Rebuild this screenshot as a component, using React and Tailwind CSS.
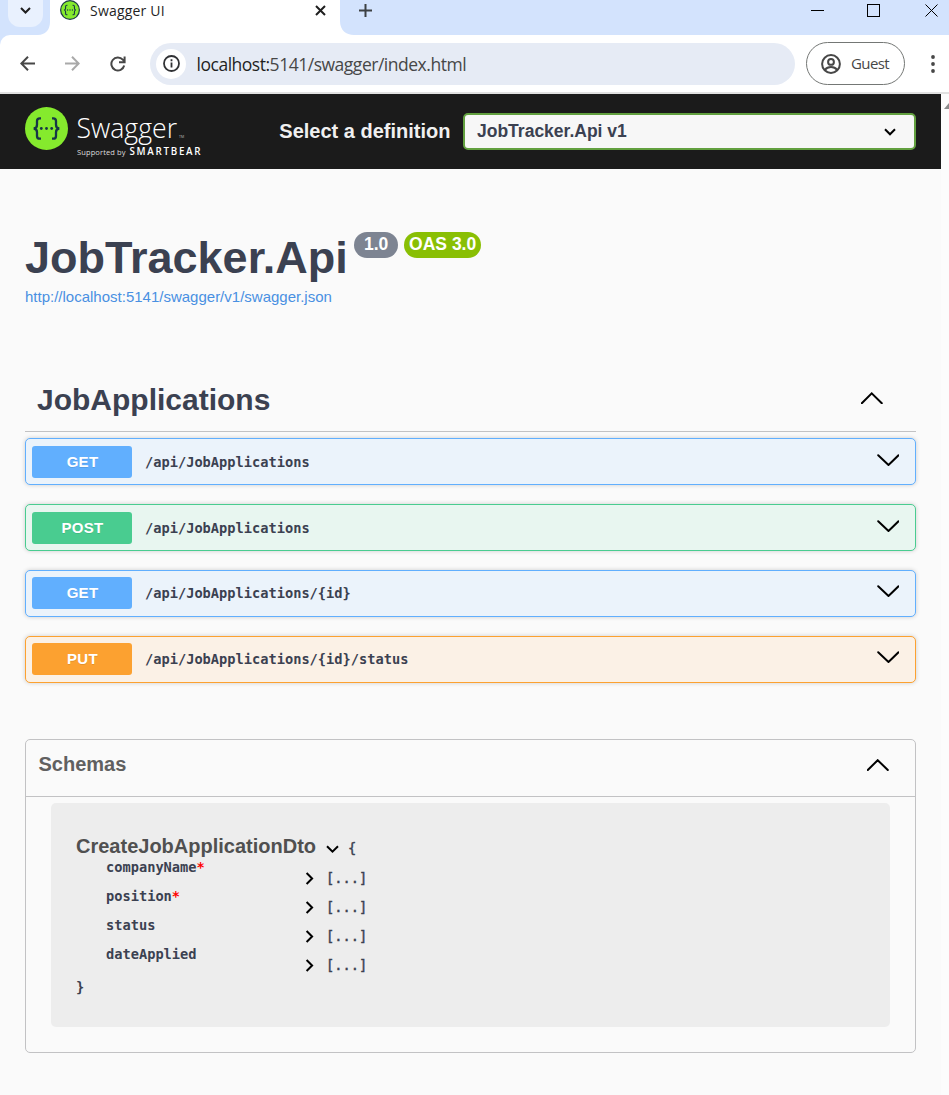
const sans = "font-['Liberation_Sans',Arial,sans-serif]";
const ui = "font-['Open_Sans','Noto_Sans',sans-serif]";
const mono = "font-['DejaVu_Sans_Mono','Liberation_Mono',monospace]";

function BracesLogo({ className, ring }) {
  return (
    <svg className={className} viewBox="0 0 43 43" fill="none">
      <circle cx="21.5" cy="21.5" r="21.5" fill={ring ? '#1d3b46' : '#85ea2d'} />
      {ring && <circle cx="21.5" cy="21.5" r="18.8" fill="#85ea2d" />}
      <path
        d="M16 11.3h-1.3c-1.8 0-2.7 1-2.7 2.8v3.6c0 2.3-1 3.6-3.3 3.8c2.3.2 3.3 1.5 3.3 3.8v3.6c0 1.8.9 2.8 2.7 2.8H16M27 11.3h1.3c1.8 0 2.7 1 2.7 2.8v3.6c0 2.3 1 3.6 3.3 3.8c-2.3.2-3.3 1.5-3.3 3.8v3.6c0 1.8-.9 2.8-2.7 2.8H27"
        stroke="#173647"
        strokeWidth="2.3"
      />
      <circle cx="16.3" cy="21.5" r="1.4" fill="#173647" />
      <circle cx="21.5" cy="21.5" r="1.4" fill="#173647" />
      <circle cx="26.7" cy="21.5" r="1.4" fill="#173647" />
    </svg>
  );
}

function Stroke({ className, box, d, width = 2, color = '#000', cap = 'butt' }) {
  return (
    <svg className={className} viewBox={box} fill="none" stroke={color} strokeWidth={width} strokeLinecap={cap}>
      <path d={d} />
    </svg>
  );
}

function TabStrip() {
  return (
    <div className="flex h-[35px] bg-[#d3e3fd]">
      <div className="ml-2 flex h-[27px] w-[35px] items-start justify-center rounded-b-[12px] bg-[#e9f1fe] pt-[7px]">
        <Stroke className="h-[7px] w-[11px]" box="0 0 11 7" d="M1 1l4.5 4.5L10 1" color="#1f1f1f" />
      </div>
      <svg className="ml-[-5px] h-[35px] w-[12px]" viewBox="0 0 12 35">
        <path d="M12 22v13H0c7 0 12-5 12-13z" fill="#fff" />
      </svg>
      <div className="flex h-[35px] w-[290px] items-start bg-white">
        <BracesLogo className="ml-[10px] h-5 w-5" ring />
        <span className={`${ui} ml-[10px] pt-px text-[14px] leading-5 tracking-[0.2px] text-[#1f1f1f]`}>Swagger UI</span>
        <Stroke className="ml-auto mr-[14.5px] mt-[5px] h-[11px] w-[11px]" box="0 0 11 11" d="M1 1l9 9M10 1l-9 9" color="#1f1f1f" />
      </div>
      <svg className="h-[35px] w-[14px]" viewBox="0 0 14 35">
        <path d="M0 21v14h14c-8 0-14-5-14-14z" fill="#fff" />
      </svg>
      <Stroke className="ml-[5px] mt-1 h-[13px] w-[13px]" box="0 0 13 13" d="M6.5 0v13M0 6.5h13" color="#3c4043" />
      <div className="ml-auto flex">
        <Stroke className="mt-1 h-[13px] w-[13px]" box="0 0 13 13" d="M0 6.5h13" width={1} />
        <div className="ml-[43px] mt-1 h-[13px] w-[13px] border border-black" />
        <Stroke className="ml-[45px] mr-[11px] mt-1 h-[13px] w-[13px]" box="0 0 13 13" d="M.5.5l12 12M12.5.5l-12 12" width={1} />
      </div>
    </div>
  );
}

function Toolbar() {
  return (
    <div className="bg-[#d3e3fd]">
      <div className="flex h-[57px] items-center rounded-tl-[10px] bg-white">
        <Stroke className="ml-5 h-[15px] w-[15px]" box="0 0 15 15" d="M15 7.5H1.5M8 .8L1.3 7.5L8 14.2" color="#474747" />
        <Stroke className="ml-[30px] h-[15px] w-[15px]" box="0 0 15 15" d="M0 7.5h13.5M7 .8l6.7 6.7L7 14.2" color="#a9a9a9" />
        <Stroke
          className="ml-[29.5px] h-4 w-4"
          box="0 0 16 16"
          d="M14.2 9.5A6.5 6.5 0 1 1 12.8 3.700L14.500 5.600M14.600 .5V6.200H9"
          color="#474747"
        />
        <div className="ml-[24.5px] flex h-[42px] w-[645px] items-center rounded-full bg-[#e6ebf5]">
          <div className="ml-[6px] flex h-[30px] w-[30px] items-center justify-center rounded-full bg-white">
            <svg className="h-[17px] w-[17px]" viewBox="0 0 17 17" fill="none" stroke="#303134" strokeWidth="1.8">
              <circle cx="8.5" cy="8.5" r="7.5" />
              <path d="M8.5 7.5v5M8.5 4.3v1.9" />
            </svg>
          </div>
          <span className={`${ui} ml-[10.5px] whitespace-nowrap pt-px text-[17.5px] leading-6 tracking-[-0.48px] text-[#474747]`}>
            <span className="text-[#1f1f1f]">localhost:</span>5141/swagger/index.html
          </span>
        </div>
        <div className="ml-[11px] flex h-[43px] w-[99px] items-center rounded-full border border-[#747775]">
          <svg className="ml-[14px] h-5 w-5" viewBox="0 0 20 20" fill="none" stroke="#474747" strokeWidth="2">
            <circle cx="10" cy="10" r="8.9" />
            <circle cx="10" cy="7.9" r="2.9" />
            <path d="M3.8 16c1.6-2 3.7-2.9 6.2-2.9s4.6.9 6.2 2.9" />
          </svg>
          <span className={`${ui} ml-[10px] pb-px text-[15px] leading-5 tracking-[-0.6px] text-[#474747]`}>Guest</span>
        </div>
        <svg className="ml-[25.5px] h-[18px] w-1" viewBox="0 0 4 18" fill="#474747">
          <circle cx="2" cy="2" r="1.9" />
          <circle cx="2" cy="9" r="1.9" />
          <circle cx="2" cy="16" r="1.9" />
        </svg>
      </div>
    </div>
  );
}

function TopBar() {
  return (
    <div className="flex h-[75px] w-[941px] bg-[#1b1b1b]">
      <BracesLogo className="ml-[25px] mt-[13px] h-[43px] w-[43px]" />
      <svg className={`${ui} ml-[9px] h-[75px] w-[130px]`} viewBox="0 0 130 75" fill="#fff">
        <text x="-0.5" y="43.5" fontSize="27.5" fontWeight="300" textLength="100.5" lengthAdjust="spacingAndGlyphs">Swagger</text>
        <text x="102" y="43.5" fontSize="3.5" fill="#bbb">TM</text>
        <text x="0" y="61" fontSize="7.5" fill="#ddd" textLength="48.5" lengthAdjust="spacing">Supported by</text>
        <text x="52.5" y="61" fontSize="9.8" fontWeight="600" fill="#fff" textLength="71" lengthAdjust="spacing">SMARTBEAR</text>
      </svg>
      <span className="ml-auto mr-[12.5px] mt-[25px] text-[20px] font-bold leading-6 text-[#f0f0f0]">Select a definition</span>
      <div className="mr-[25px] mt-[19px] flex h-[37px] w-[453px] items-center rounded-[5px] border-2 border-[#62a03f] bg-[#f7f7f7]">
        <span className="ml-3 pb-px text-[17.5px] font-bold leading-5 text-[#3b4151]">JobTracker.Api v1</span>
        <Stroke className="ml-auto mr-[18.5px] h-[8px] w-3" box="0 0 12 8" d="M1 1.3l5 5l5-5" />
      </div>
    </div>
  );
}

const operations = [
  { method: 'GET', path: '/api/JobApplications', box: 'border-[#61affe] bg-[#ebf3fb] pt-[7px]', badge: 'bg-[#61affe]' },
  { method: 'POST', path: '/api/JobApplications', box: 'border-[#49cc90] bg-[#e8f6f0] pt-[7px]', badge: 'bg-[#49cc90]' },
  { method: 'GET', path: '/api/JobApplications/{id}', box: 'border-[#61affe] bg-[#ebf3fb] pt-[6px]', badge: 'bg-[#61affe]' },
  { method: 'PUT', path: '/api/JobApplications/{id}/status', box: 'border-[#fca130] bg-[#fbf1e6] pt-[6px]', badge: 'bg-[#fca130]' },
];

function Operation({ method, path, box, badge }) {
  return (
    <div className={`flex h-[47px] items-start rounded-[5px] border pl-[6px] pr-4 shadow-[0_0_4px_rgba(0,0,0,0.19)] ${box}`}>
      <span className={`h-8 w-[100px] rounded-[3px] pl-px text-center text-[15px] font-bold leading-8 tracking-[0.3px] text-white [text-shadow:0_1px_0_rgba(0,0,0,0.1)] ${badge}`}>
        {method}
      </span>
      <span className={`${mono} ml-[13px] text-[13.68px] font-bold leading-8 text-[#3b4151]`}>{path}</span>
      <Stroke className="ml-auto mt-2 h-3 w-[22px]" box="0 0 22 12" d="M1.2 1.3L11.5 11L21.5 1.3" cap="round" width={2} />
    </div>
  );
}

const properties = [
  { name: 'companyName', required: true },
  { name: 'position', required: true },
  { name: 'status' },
  { name: 'dateApplied' },
];

function Schemas() {
  return (
    <section className="mt-14 h-[314px] rounded-[5px] border border-[#c2c2c4]">
      <div className="flex h-[57px] items-start justify-between border-b border-[#c2c2c4] pl-[12.5px] pr-[26px]">
        <h4 className="mt-3 text-[20px] font-bold leading-6 text-[#606060]">Schemas</h4>
        <Stroke className="mt-[19px] h-3 w-[22px]" box="0 0 22 12" d="M.8 11L10.700 1.200L20.800 11" cap="round" width={2} />
      </div>
      <div className={`${mono} ml-[25px] mr-[25px] mt-[6px] h-[224px] rounded-[5px] bg-[#ededed] pl-[25px] pt-[30px] text-[13.68px] font-bold text-[#3b4151]`}>
        <div className="flex h-[26px] items-start">
          <span className={`${sans} text-[20px] leading-[26px] text-[#505050]`}>CreateJobApplicationDto</span>
          <Stroke className="ml-[10px] mt-[12px] h-[8px] w-[13px]" box="0 0 13 8" d="M1 1.3l5.5 5.3l5.5-5.3" />
          <span className="ml-[9px] pt-[2px] font-normal leading-[26px] [-webkit-text-stroke:0.4px]">{'{'}</span>
        </div>
        {properties.map(({ name, required }) => (
          <div key={name} className="flex h-[29px] items-start pl-[30px]">
            <span className="w-[199px] leading-[17px]">
              {name}
              {required && <span className="text-[#ff0000]">*</span>}
            </span>
            <Stroke className="mt-[13px] h-[13px] w-[9px]" box="0 0 9 13" d="M1.6 1l5.5 5.5l-5.5 5.5" />
            <span className="ml-[12px] mt-[9px] font-normal leading-5 [-webkit-text-stroke:0.4px]">[...]</span>
          </div>
        ))}
        <div className="pt-[2px] leading-5">{'}'}</div>
      </div>
    </section>
  );
}

export default function App() {
  return (
    <div className={`${sans} h-[1095px] w-[949px] overflow-hidden bg-[#fafafa]`}>
      <TabStrip />
      <Toolbar />
      <div className="h-[2px] bg-[#e1e1e1]" />
      <div className="flex">
        <main className="h-[1001px] w-[941px]">
          <TopBar />
          <div className="px-[25px]">
            <div className="flex h-[115px] items-start pt-[62px]">
              <h1 className="text-[45px] font-bold leading-[53px] text-[#3b4151]">JobTracker.Api</h1>
              <span className="ml-[6px] mt-px h-[26px] w-11 rounded-full bg-[#7d8492] pl-px text-center text-[17.5px] font-bold leading-[25px] text-white">1.0</span>
              <span className="ml-[6px] mt-px h-[26px] w-[77px] whitespace-nowrap rounded-full bg-[#89bf04] pl-px text-center text-[17.5px] font-bold leading-[25px] text-white">OAS 3.0</span>
            </div>
            <a className="block h-[26px] pt-[3px] text-[15px] leading-5 text-[#4990e2]">http://localhost:5141/swagger/v1/swagger.json</a>
            <div className="mt-[58px] flex h-[64px] items-start justify-between border-b border-[#c2c2c4] pl-3 pr-[33px]">
              <h3 className="mt-[14px] text-[30px] font-bold leading-9 text-[#3b4151]">JobApplications</h3>
              <Stroke className="mt-[24px] h-3 w-[22px]" box="0 0 22 12" d="M.8 11.2L10.700 1.400L20.800 11.200" cap="round" width={2} />
            </div>
            <div className="mt-[6px] flex flex-col gap-[19px]">
              {operations.map((op, i) => (
                <Operation key={i} {...op} />
              ))}
            </div>
            <Schemas />
          </div>
        </main>
        <aside className="w-2 overflow-hidden bg-[#fcfcfc] pt-[9px]">
          <svg className="ml-[3px] h-[6px] w-[10px]" viewBox="0 0 10 6" fill="#8b8b8b">
            <path d="M0 6L5 0l5 6z" />
          </svg>
        </aside>
      </div>
    </div>
  );
}
